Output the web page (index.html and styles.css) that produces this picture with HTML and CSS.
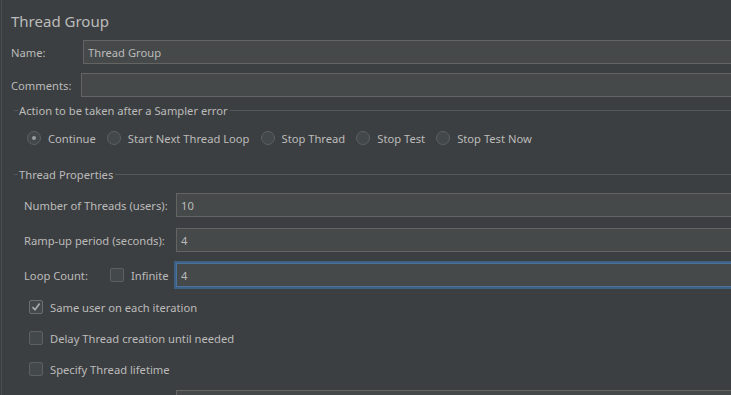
FILE: index.html
```html
<!DOCTYPE html>
<html lang="en">
<head>
    <meta charset="UTF-8">
    <title>Thread Group</title>
    <link rel="stylesheet" href="styles.css">
</head>
<body>
    <div class="panel">
        <h1 class="title">Thread Group</h1>

        <div class="row name-row">
            <label class="label">Name:</label>
            <input type="text" class="field" value="Thread Group">
        </div>
        <div class="row comments-row">
            <label class="label">Comments:</label>
            <input type="text" class="field" value="">
        </div>

        <div class="group">
            <div class="group-title"><span>Action to be taken after a Sampler error</span></div>
            <div class="radios">
                <label class="radio"><span class="dot checked"></span>Continue</label>
                <label class="radio"><span class="dot"></span>Start Next Thread Loop</label>
                <label class="radio"><span class="dot"></span>Stop Thread</label>
                <label class="radio"><span class="dot"></span>Stop Test</label>
                <label class="radio"><span class="dot"></span>Stop Test Now</label>
            </div>
        </div>

        <div class="group props">
            <div class="group-title"><span>Thread Properties</span></div>
            <div class="prop-row">
                <label class="label">Number of Threads (users):</label>
                <input type="text" class="field" value="10">
            </div>
            <div class="prop-row">
                <label class="label">Ramp-up period (seconds):</label>
                <input type="text" class="field" value="4">
            </div>
            <div class="prop-row">
                <div class="label loop-label">
                    <span class="loop-text">Loop Count:</span>
                    <span class="box"></span>
                    <span>Infinite</span>
                </div>
                <input type="text" class="field focused" value="4">
            </div>

            <label class="check first"><span class="box on">
                <svg width="12" height="12" viewBox="0 0 12 12"><path d="M2.5 6.2 L5 8.8 L9.6 2.6" fill="none" stroke="#a9abad" stroke-width="1.7"/></svg>
            </span>Same user on each iteration</label>
            <label class="check"><span class="box"></span>Delay Thread creation until needed</label>
            <label class="check"><span class="box"></span>Specify Thread lifetime</label>

            <div class="prop-row">
                <label class="label"></label>
                <input type="text" class="field" value="">
            </div>
        </div>
    </div>
</body>
</html>
```

FILE: styles.css
```css
html, body {
    margin: 0;
    height: 100%;
    overflow: hidden;
}

body {
    background-color: #3c3f41;
    color: #bbbbbb;
    font-family: 'Noto Sans', 'Open Sans', sans-serif;
    font-size: 11.2px;
    padding-left: 1px;
}

.panel {
    width: 790px;
    height: 100%;
    border-left: 1px solid #4b4e50;
    padding-left: 9px;
}

.title {
    font-size: 15px;
    font-weight: normal;
    line-height: 20px;
    margin: 0;
    padding-top: 11px;
}

.row {
    display: flex;
    align-items: center;
    height: 24px;
}

.name-row {
    margin-top: 9px;
}

.name-row .label {
    width: 72px;
    flex: none;
}

.comments-row {
    margin-top: 9px;
}

.comments-row .label {
    width: 70px;
    flex: none;
}

.field {
    flex: 1;
    box-sizing: border-box;
    height: 24px;
    margin: 0;
    padding: 0 4px;
    background-color: #45494a;
    border: 1px solid #646464;
    color: #bbbbbb;
    font: inherit;
    outline: none;
}

.field.focused {
    border-color: #4a729b;
    box-shadow: 0 0 0 2px #3d6185;
}

.group {
    margin-top: 5px;
    padding-left: 3px;
}

.group-title {
    display: flex;
    align-items: center;
    height: 16px;
}

.group-title::before {
    content: "";
    width: 4px;
    border-top: 1px solid #555759;
}

.group-title::after {
    content: "";
    flex: 1;
    border-top: 1px solid #555759;
}

.group-title span {
    padding: 0 2px 0 1px;
}

.radios {
    display: flex;
    align-items: center;
    height: 20px;
    margin-top: 10px;
    padding-left: 13px;
    gap: 11px;
}

.radio {
    display: flex;
    align-items: center;
    gap: 7px;
}

.dot {
    box-sizing: border-box;
    width: 14px;
    height: 14px;
    border-radius: 50%;
    border: 1px solid #5d6062;
    background-color: #43494a;
    display: flex;
    align-items: center;
    justify-content: center;
}

.dot.checked::after {
    content: "";
    width: 4px;
    height: 4px;
    border-radius: 50%;
    background-color: #9a9c9e;
}

.props .group-title {
    margin-top: 18px;
}

.prop-row {
    display: flex;
    align-items: center;
    height: 24px;
    margin-top: 11px;
    padding-left: 10px;
}

.prop-row .label {
    width: 152px;
    flex: none;
}

.loop-label {
    display: flex;
    align-items: center;
}

.loop-text {
    width: 86px;
}

.box {
    box-sizing: border-box;
    width: 14px;
    height: 14px;
    border: 1px solid #5d6062;
    border-radius: 2px;
    background-color: #43494a;
    margin-right: 7px;
    display: flex;
    align-items: center;
    justify-content: center;
}

.box.on {
    border-color: #6b6d6f;
}

.check {
    display: flex;
    align-items: center;
    height: 20px;
    margin-top: 11px;
    padding-left: 15px;
}

.check.first {
    margin-top: 10px;
}
```
